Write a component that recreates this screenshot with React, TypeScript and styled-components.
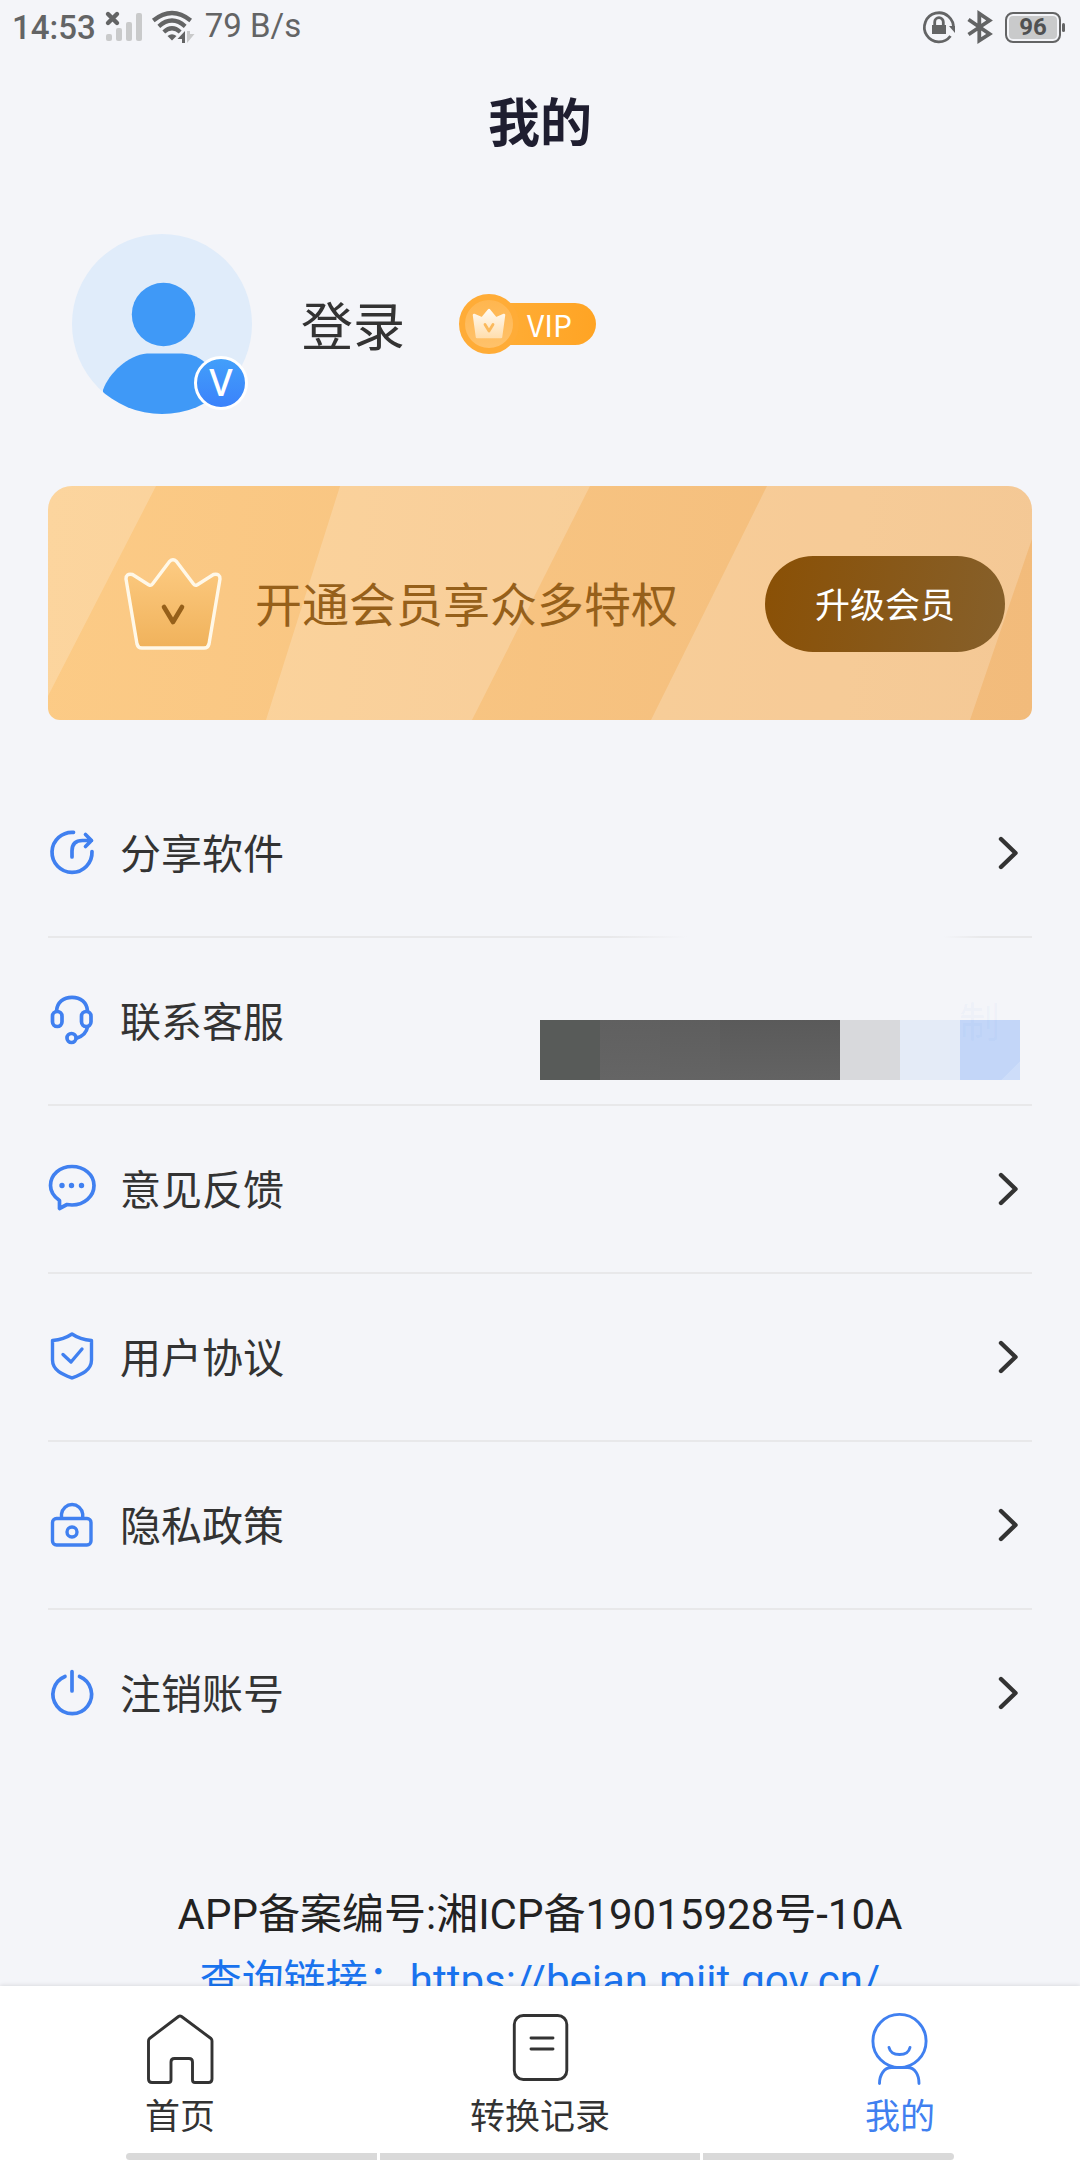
import React from "react";
import styled, { createGlobalStyle } from "styled-components";

const cjk = `"Noto Sans CJK SC", "Noto Sans", sans-serif`;
const latin = `Roboto, "Noto Sans CJK SC", sans-serif`;

const color = {
  page: "#f4f5f9",
  ink: "#333333",
  title: "#1f1e30",
  status: "#636465",
  statusFaint: "#c9cacb",
  blue: "#4080f0",
  line: "#e8e8ea",
  brown: "#96601a",
};

const GlobalStyle = createGlobalStyle`
  * { box-sizing: border-box; }
  body { margin: 0; background: ${color.page}; }
  button { border: 0; padding: 0; margin: 0; background: none; font: inherit; color: inherit; cursor: pointer; }
  svg { display: block; overflow: visible; }
`;

const Screen = styled.div`
  display: flex;
  flex-direction: column;
  height: 100vh;
  background: ${color.page};
  color: ${color.ink};
  font-family: ${cjk};
`;

const StatusBar = styled.div`
  display: flex;
  flex: none;
  align-items: center;
  justify-content: space-between;
  height: 54px;
  padding: 0 15px 0 12px;
  color: ${color.status};
  font-family: ${latin};
  font-size: 33px;
  line-height: 40px;
`;

const StatusGroup = styled.div<{ $gap: number }>`
  display: flex;
  align-items: center;
  gap: ${(p) => p.$gap}px;
`;

const Clock = styled.span`
  padding-top: 2px;
  font-weight: 500;
`;

const Speed = styled.span`
  padding-bottom: 2px;
`;

const Battery = styled.div`
  position: relative;
  display: flex;
  align-items: center;
  justify-content: center;
  width: 56px;
  height: 31px;
  margin-right: 4px;
  border: 2px solid ${color.status};
  border-radius: 8px;
  background: ${color.statusFaint};
  box-shadow: inset 0 0 0 2px ${color.page};
  color: #505152;
  font-size: 24px;
  line-height: 28px;
  font-weight: 700;

  &::after {
    content: "";
    position: absolute;
    top: 9px;
    right: -6px;
    width: 3px;
    height: 9px;
    border-radius: 2px;
    background: ${color.status};
  }
`;

const Title = styled.h1`
  flex: none;
  margin: 0;
  padding: 28px 0 30px;
  color: ${color.title};
  font-size: 52px;
  line-height: 76px;
  font-weight: 700;
  text-align: center;
`;

const Content = styled.main`
  flex: 1;
  min-height: 0;
  overflow: hidden auto;
  scrollbar-width: none;
  padding: 46px 48px 0;
`;

const Profile = styled.section`
  display: flex;
  align-items: center;
  padding: 0 24px;
`;

const Avatar = styled.div`
  position: relative;
  width: 180px;
  height: 180px;
`;

const AvatarBadge = styled.span`
  position: absolute;
  right: 4px;
  bottom: 4px;
  display: flex;
  align-items: center;
  justify-content: center;
  width: 54px;
  height: 54px;
  padding-bottom: 4px;
  border: 3px solid #ffffff;
  border-radius: 50%;
  background: linear-gradient(#429ffa, #3b82fb);
  color: #ffffff;
  font-family: "Noto Sans", sans-serif;
  font-size: 38px;
  line-height: 44px;
  font-weight: 500;
`;

const LoginButton = styled.button`
  margin-left: 49px;
  font-size: 52px;
  line-height: 76px;
`;

const VipTag = styled.div`
  display: flex;
  align-items: center;
  margin-left: 54px;
`;

const VipCoin = styled.span`
  z-index: 1;
  display: flex;
  align-items: center;
  justify-content: center;
  width: 60px;
  height: 60px;
  border: 6px solid #ffac37;
  border-radius: 50%;
  background: linear-gradient(#ffb64f, #ffc26b);
`;

const VipText = styled.span`
  height: 42px;
  margin-left: -30px;
  padding: 0 24px 0 38px;
  border-radius: 21px;
  background: linear-gradient(90deg, #ffae38, #ffa424);
  color: #ffffff;
  font-size: 30px;
  line-height: 42px;
`;

const Banner = styled.section`
  position: relative;
  display: flex;
  align-items: center;
  height: 234px;
  margin-top: 72px;
  padding: 2px 27px 0 76px;
  overflow: hidden;
  border-radius: 24px 24px 12px 12px;
  background: linear-gradient(95deg, #fccb86, #f2bb7b);
`;

const BannerStripes = styled.svg`
  position: absolute;
  inset: 0;
  width: 100%;
  height: 100%;
`;

const BannerText = styled.p`
  position: relative;
  flex: 1;
  margin: 0 0 0 33px;
  padding-bottom: 4px;
  color: ${color.brown};
  font-size: 47px;
  line-height: 68px;
  white-space: nowrap;
`;

const UpgradeButton = styled.button`
  position: relative;
  width: 240px;
  height: 96px;
  border-radius: 48px;
  background: linear-gradient(100deg, #8a5005, #86602b);
  && {
    padding-bottom: 2px;
    color: #ffffff;
    font-size: 35px;
    line-height: 52px;
  }
`;

const Menu = styled.ul`
  margin: 50px 0 0;
  padding: 0;
  list-style: none;
`;

const MenuItem = styled.li<{ $line: "full" | "faded" | "none" }>`
  height: 168px;
  padding-bottom: 2px;
  background: ${(p) =>
      p.$line === "none"
        ? "none"
        : p.$line === "full"
          ? `linear-gradient(${color.line}, ${color.line})`
          : `linear-gradient(90deg, ${color.line} 57%, transparent 65%, transparent 91%, ${color.line} 95%)`}
    bottom / 100% 2px no-repeat;
`;

const MenuButton = styled.button`
  position: relative;
  display: flex;
  align-items: center;
  gap: 24px;
  width: 100%;
  height: 100%;
  && {
    padding-right: 12px;
  }
  text-align: left;
`;

const MenuLabel = styled.span`
  flex: 1;
  padding-bottom: 4px;
  font-size: 41px;
  line-height: 60px;
`;

const Mosaic = styled.span`
  display: flex;
  align-self: flex-end;
  height: 60px;
  margin-bottom: 24px;
`;

const MosaicTile = styled.span<{ $fill: string }>`
  width: 60px;
  background: ${(p) => p.$fill};
`;

const CopyGhost = styled.span`
  position: absolute;
  right: 32px;
  top: 51px;
  color: rgba(64, 128, 240, 0.04);
  font-size: 41px;
  line-height: 60px;
`;

const Filing = styled.footer`
  margin-top: 104px;
  color: #222222;
  font-family: ${latin};
  font-size: 42px;
  line-height: 66px;
  text-align: center;
  white-space: nowrap;
`;

const FilingLine = styled.p`
  height: 66px;
  margin: 0;
`;

const FilingLink = styled.a`
  color: #1a73ee;
  text-decoration: none;
`;

const TabBar = styled.nav`
  z-index: 1;
  flex: none;
  height: 174px;
  background: #ffffff;
  box-shadow: 0 -1px 4px rgba(0, 0, 0, 0.1);
`;

const Tabs = styled.div`
  display: grid;
  grid-template-columns: repeat(3, 1fr);
  height: 167px;
`;

const TabButton = styled.button<{ $active?: boolean }>`
  display: flex;
  flex-direction: column;
  align-items: center;
  && {
    padding-top: 26px;
    color: ${(p) => (p.$active ? color.blue : color.ink)};
    font-size: 35px;
    line-height: 52px;
  }
`;

const HomeIndicator = styled.div`
  display: grid;
  grid-template-columns: 251fr 320fr 251fr;
  gap: 3px;
  height: 7px;
  margin: 0 126px;
  overflow: hidden;
  border-radius: 4px;
`;

const IndicatorPart = styled.span`
  background: #d9d9d9;
`;

const SignalIcon = () => (
  <svg width="36" height="30" viewBox="0 0 36 30" aria-hidden="true">
    <g fill={color.statusFaint}>
      <rect x="0" y="22" width="6" height="7" rx="2" />
      <rect x="10" y="16" width="6" height="13" rx="2" />
      <rect x="20" y="10" width="6" height="19" rx="2" />
      <rect x="30" y="1" width="6" height="28" rx="2" />
    </g>
    <path d="M2 2 11 11M11 2 2 11" stroke={color.status} strokeWidth="4.4" strokeLinecap="round" />
  </svg>
);

const WifiIcon = () => (
  <svg width="43" height="32" viewBox="0 0 43 32" aria-hidden="true">
    <g fill="none" stroke={color.status} strokeWidth="4.2">
      <path d="M1.3 9.5Q20 -5.5 38.7 9.5" />
      <path d="M6.8 15.3Q20 3.8 33.2 15.3" />
      <path d="M11.8 21Q20 13.5 28.2 21" />
    </g>
    <path d="M15.5 25Q20 21.5 24.5 25L20 29.5Z" fill={color.status} />
    <path d="M33 20V32H30V28H25.5Z" fill={color.status} />
    <path d="M35 32V20H38V23H42.5Z" fill={color.statusFaint} />
  </svg>
);

const RotationLockIcon = () => (
  <svg width="32" height="32" viewBox="0 0 32 32" aria-hidden="true">
    <path d="M30.3 18A14.5 14.5 0 1 0 27.5 25" fill="none" stroke={color.status} strokeWidth="2.8" />
    <path d="M26 15H32V22Z" fill={color.status} />
    <rect x="9" y="14" width="14" height="9" fill={color.status} />
    <path d="M11.7 15V11A4.3 4.3 0 0 1 20.3 11V15" fill="none" stroke={color.status} strokeWidth="2.8" />
  </svg>
);

const BluetoothIcon = () => (
  <svg width="26" height="32" viewBox="0 0 26 32" aria-hidden="true">
    <path
      d="M1.5 8.5 22.5 23 12.3 29.5V2.5L22.5 9.5 1.5 23.5"
      fill="none"
      stroke={color.status}
      strokeWidth="3.8"
    />
  </svg>
);

const AvatarPicture = () => (
  <svg width="180" height="180" viewBox="0 0 180 180" aria-hidden="true">
    <defs>
      <clipPath id="avatar-clip">
        <circle cx="90" cy="90" r="90" />
      </clipPath>
    </defs>
    <circle cx="90" cy="90" r="90" fill="#e0ecfa" />
    <circle cx="91.5" cy="80.5" r="31.7" fill="#3f99f7" />
    <path
      clipPath="url(#avatar-clip)"
      d="M75 119.500H110C135 120 152 145 155 180H31V156C37 139 56 121 75 119.500Z"
      fill="#3f99f7"
    />
  </svg>
);

const CoinCrownIcon = () => (
  <svg width="34" height="32" viewBox="0 0 34 32" aria-hidden="true">
    <defs>
      <linearGradient id="coin-crown" x1="0" y1="0" x2="0" y2="1">
        <stop offset="0" stopColor="#fffaf2" />
        <stop offset="1" stopColor="#ffdfb0" />
      </linearGradient>
    </defs>
    <path
      d="M2 7 10 10.5 17 2 24 10.5 32 7 29 29H5Z"
      fill="url(#coin-crown)"
      stroke="url(#coin-crown)"
      strokeWidth="2.5"
      strokeLinejoin="round"
    />
    <path d="M13 16.500 17 23 21 16.500" fill="none" stroke="#fbb95c" strokeWidth="2.8" strokeLinecap="round" strokeLinejoin="round" />
  </svg>
);

const CrownPicture = styled.svg`
  position: relative;
  flex: none;
`;

const BannerCrown = () => (
  <CrownPicture width="98" height="92" viewBox="0 0 98 92" aria-hidden="true">
    <defs>
      <linearGradient id="banner-crown" x1="0" y1="0" x2="0" y2="1">
        <stop offset="0" stopColor="#fdcb82" />
        <stop offset="1" stopColor="#f0b25b" />
      </linearGradient>
    </defs>
    <path
      d="M8.5 16.5 25 27Q27 28 28.5 26L45.5 3.5Q49 0 52.5 3.5L69.5 26Q71 28 73 27L89.500 16.500Q96 15 96 21L85 86Q84 90 80 90H18Q14 90 13 86L2 21Q2 15 8.500 16.500Z"
      fill="url(#banner-crown)"
      stroke="#fff8e8"
      strokeWidth="3.4"
      strokeLinejoin="round"
    />
    <path d="M40 49 49 64 58 49" fill="none" stroke={color.brown} strokeWidth="4.6" strokeLinecap="round" strokeLinejoin="round" />
  </CrownPicture>
);

const LineIcon = ({ children, width = 3.7 }: { children: React.ReactNode; width?: number }) => (
  <svg
    width="48"
    height="48"
    viewBox="0 0 48 48"
    fill="none"
    stroke={color.blue}
    strokeWidth={width}
    strokeLinecap="round"
    strokeLinejoin="round"
    aria-hidden="true"
  >
    {children}
  </svg>
);

const ShareIcon = () => (
  <LineIcon>
    <path d="M25.500 3.400A20 20 0 1 0 44 22.500" />
    <path d="M24 28V22Q24 11.500 34.500 11.500H43.500M37.500 5.500 43.500 11.500 37.500 17.500" />
  </LineIcon>
);

const HeadsetIcon = () => (
  <LineIcon>
    <rect x="4.5" y="14.5" width="9.5" height="15" rx="4.7" />
    <rect x="33.5" y="14.500" width="9.500" height="15" rx="4.7" />
    <path d="M8.500 14C9 5.500 15.500 .3 24 .3S39 5.500 39.500 14M39.500 30C38.500 35.500 35 39 29 41" />
    <circle cx="23.500" cy="41" r="4.500" />
  </LineIcon>
);

const FeedbackIcon = () => (
  <LineIcon>
    <path d="M11.500 35.500C6.500 32 2.500 27 2.500 20.500 2.500 9.500 12 1.500 24 1.500S46 9.500 46 20.500 36 40 24 40L19 39.500 11.500 43.500Z" />
    <path d="M14 20.500H14.010M23.500 20.500H23.510M33.500 20.500H33.510" strokeWidth="5.4" />
  </LineIcon>
);

const ShieldIcon = () => (
  <LineIcon width={3.4}>
    <path d="M24 1Q32 6.500 43.500 7.500V27C43.500 37.500 33 41.500 24 45 15 41.500 4.500 37.500 4.500 27V7.500Q16 6.500 24 1Z" />
    <path d="M15 21.500 23 29 34 16" />
  </LineIcon>
);

const LockIcon = () => (
  <LineIcon width={3.4}>
    <rect x="4.500" y="17.500" width="38.500" height="26.500" rx="4" />
    <path d="M13.500 17V13A10.700 11 0 0 1 34.700 13V17" />
    <circle cx="24" cy="31" r="5" />
  </LineIcon>
);

const PowerIcon = () => (
  <LineIcon width={3.7}>
    <path d="M24 2.500V22M17 7.500A19.300 19.300 0 1 0 31.500 7.500" />
  </LineIcon>
);

const Chevron = () => (
  <svg width="24" height="36" viewBox="0 0 24 36" fill="none" aria-hidden="true">
    <path d="M5 4 19.500 18 5 32" stroke={color.ink} strokeWidth="4.4" strokeLinecap="round" strokeLinejoin="round" />
  </svg>
);

const TabIcon = ({ children }: { children: React.ReactNode }) => (
  <svg
    width="72"
    height="76"
    viewBox="0 0 72 76"
    fill="none"
    stroke="currentColor"
    strokeWidth="2.9"
    strokeLinecap="round"
    strokeLinejoin="round"
    aria-hidden="true"
  >
    {children}
  </svg>
);

const HomeIcon = () => (
  <TabIcon>
    <path d="M34.500 4.500Q36 3.500 37.500 4.500L67 26.500Q68 27.500 68 29V67Q68 70.500 64.500 70.500H51Q48.500 70.500 48.500 68V50Q48.500 46.500 45 46.500H30.500Q27 46.500 27 50V68Q27 70.500 24.500 70.500H8Q4.500 70.500 4.500 67V29Q4.500 27.500 5.500 26.500Z" />
  </TabIcon>
);

const RecordIcon = () => (
  <TabIcon>
    <rect x="10.300" y="3.500" width="52.500" height="64" rx="9" />
    <path d="M27 26H49M27 37H49" />
  </TabIcon>
);

const MineIcon = () => (
  <TabIcon>
    <circle cx="35.500" cy="29" r="26.600" />
    <path d="M25 35.500C26 40 30 42.500 35.500 42.500S45 40 46 35.500M15.500 71.500C15.500 63 20 55.500 27.500 55.500H43.500C51 55.500 55 63 55 71.500" />
  </TabIcon>
);

const tiles = [
  "#585b59",
  "linear-gradient(#606060, #656565)",
  "linear-gradient(#5e5e5e, #646464)",
  "linear-gradient(#5a5a5a, #636363)",
  "linear-gradient(#5a5a5a, #636363)",
  "#d8d9dc",
  "#e4ebf7",
  "linear-gradient(135deg, #c3d6f8 84%, #cdddf9 85%)",
];

const menu = [
  { label: "分享软件", Icon: ShareIcon },
  { label: "联系客服", Icon: HeadsetIcon, masked: true },
  { label: "意见反馈", Icon: FeedbackIcon },
  { label: "用户协议", Icon: ShieldIcon },
  { label: "隐私政策", Icon: LockIcon },
  { label: "注销账号", Icon: PowerIcon },
];

const tabs = [
  { label: "首页", Icon: HomeIcon },
  { label: "转换记录", Icon: RecordIcon },
  { label: "我的", Icon: MineIcon, active: true },
];

export default function App() {
  return (
    <Screen>
      <GlobalStyle />
      <StatusBar>
        <StatusGroup $gap={10}>
          <Clock>14:53</Clock>
          <SignalIcon />
          <WifiIcon />
          <Speed>79 B/s</Speed>
        </StatusGroup>
        <StatusGroup $gap={12}>
          <RotationLockIcon />
          <BluetoothIcon />
          <Battery>96</Battery>
        </StatusGroup>
      </StatusBar>
      <Title>我的</Title>

      <Content>
        <Profile>
          <Avatar>
            <AvatarPicture />
            <AvatarBadge>V</AvatarBadge>
          </Avatar>
          <LoginButton type="button">登录</LoginButton>
          <VipTag>
            <VipCoin>
              <CoinCrownIcon />
            </VipCoin>
            <VipText>VIP</VipText>
          </VipTag>
        </Profile>

        <Banner>
          <BannerStripes viewBox="0 0 984 234" preserveAspectRatio="none" aria-hidden="true">
            <g fill="#ffffff" fillOpacity="0.2">
              <path d="M0 0H108L0 210Z" />
              <path d="M292 0H542L424 234H218Z" />
              <path d="M719 0H984V53L922 234H603Z" />
            </g>
          </BannerStripes>
          <BannerCrown />
          <BannerText>开通会员享众多特权</BannerText>
          <UpgradeButton type="button">升级会员</UpgradeButton>
        </Banner>

        <Menu>
          {menu.map(({ label, Icon, masked }, i) => (
            <MenuItem key={label} $line={i === 0 ? "faded" : i === menu.length - 1 ? "none" : "full"}>
              <MenuButton type="button">
                <Icon />
                <MenuLabel>{label}</MenuLabel>
                {masked ? (
                  <>
                    <Mosaic>
                      {tiles.map((fill, n) => (
                        <MosaicTile key={n} $fill={fill} />
                      ))}
                    </Mosaic>
                    <CopyGhost>制</CopyGhost>
                  </>
                ) : (
                  <Chevron />
                )}
              </MenuButton>
            </MenuItem>
          ))}
        </Menu>

        <Filing>
          <FilingLine>APP备案编号:湘ICP备19015928号-10A</FilingLine>
          <FilingLine>
            <FilingLink href="https://beian.miit.gov.cn/">查询链接：https://beian.miit.gov.cn/</FilingLink>
          </FilingLine>
        </Filing>
      </Content>

      <TabBar>
        <Tabs>
          {tabs.map(({ label, Icon, active }) => (
            <TabButton key={label} type="button" $active={active}>
              <Icon />
              {label}
            </TabButton>
          ))}
        </Tabs>
        <HomeIndicator>
          <IndicatorPart />
          <IndicatorPart />
          <IndicatorPart />
        </HomeIndicator>
      </TabBar>
    </Screen>
  );
}
